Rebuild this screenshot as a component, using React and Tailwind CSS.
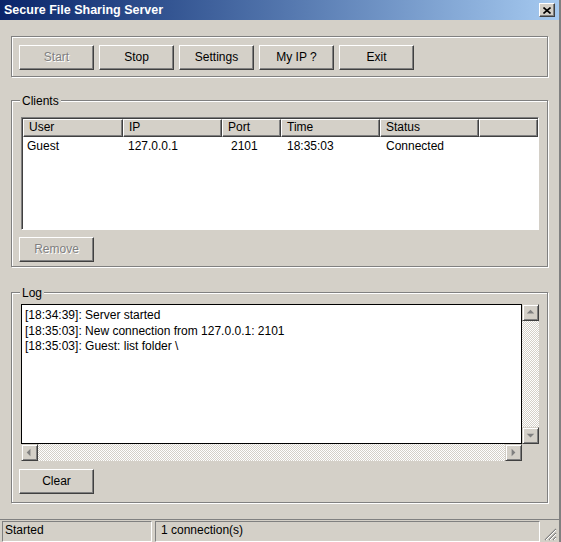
import React from 'react'

const font = { fontFamily: '"Liberation Sans", Arial, sans-serif' }

function Button({ children, disabled }) {
  return (
    <div className="w-[75px] h-[25px] bg-[#d4d0c8] border border-t-white border-l-white border-r-[#404040] border-b-[#404040] shadow-[inset_-1px_-1px_0_#808080] flex items-center justify-center text-[12px] pb-[2px]">
      <span className={disabled ? 'text-[#808080] [text-shadow:1px_1px_0_#ffffff]' : 'text-black'}>{children}</span>
    </div>
  )
}

function Group({ title, className, children }) {
  return (
    <div className={'relative mx-[11px] border border-[#808080] shadow-[inset_1px_1px_0_#ffffff,1px_1px_0_#ffffff] ' + className}>
      <div className="absolute left-[8px] -top-[7px] px-[2px] bg-[#d4d0c8] text-[12px] leading-[14px]">{title}</div>
      {children}
    </div>
  )
}

function ScrollBtn({ dir }) {
  const arrows = {
    up: 'M4 9 L8 5 L12 9 Z',
    down: 'M4 6 L12 6 L8 10 Z',
    left: 'M9 4 L9 12 L5 8 Z',
    right: 'M6 4 L6 12 L10 8 Z',
  }
  return (
    <div className="w-[17px] h-[17px] shrink-0 bg-[#d4d0c8] border border-t-[#d4d0c8] border-l-[#d4d0c8] border-r-[#404040] border-b-[#404040] shadow-[inset_1px_1px_0_#ffffff,inset_-1px_-1px_0_#808080] flex items-center justify-center">
      <svg width="15" height="15" viewBox="0 0 16 16">
        <path d={arrows[dir]} fill="#808080" />
      </svg>
    </div>
  )
}

const checker = 'bg-[repeating-conic-gradient(#d4d0c8_0_25%,#ffffff_0_50%)] bg-[length:2px_2px]'

const cols = [
  { name: 'User', w: 'w-[100px]' },
  { name: 'IP', w: 'w-[99px]' },
  { name: 'Port', w: 'w-[59px]' },
  { name: 'Time', w: 'w-[99px]' },
  { name: 'Status', w: 'w-[99px]' },
]

export default function App() {
  return (
    <div style={font} className="w-[561px] h-[542px] bg-[#d4d0c8] flex flex-col text-black overflow-hidden border-r-2 border-r-[#808080]">
      {/* title bar */}
      <div className="h-[20px] shrink-0 bg-gradient-to-r from-[#0a246a] to-[#a6caf0] flex items-center justify-between pl-[4px] pr-[4px]">
        <span className="text-white font-bold text-[12.5px] leading-none">Secure File Sharing Server</span>
        <div className="w-[16px] h-[14px] bg-[#d4d0c8] border border-t-white border-l-white border-r-[#404040] border-b-[#404040] shadow-[inset_-1px_-1px_0_#808080] flex items-center justify-center">
          <svg width="8" height="7" viewBox="0 0 8 7">
            <path d="M0.5 0.5 L7.5 6.5 M7.5 0.5 L0.5 6.5" stroke="black" strokeWidth="1.6" />
          </svg>
        </div>
      </div>

      {/* toolbar */}
      <div className="mt-[16px] mx-[11px] h-[41px] border border-[#808080] shadow-[inset_1px_1px_0_#ffffff,1px_1px_0_#ffffff] flex items-start gap-[5px] pl-[7px] pt-[8px]">
        <Button disabled>Start</Button>
        <Button>Stop</Button>
        <Button>Settings</Button>
        <Button>My IP ?</Button>
        <Button>Exit</Button>
      </div>

      {/* clients */}
      <Group title="Clients" className="mt-[23px] h-[167px] pt-[16px] pl-[9px] pr-[7px]">
        <div className="w-[518px] h-[113px] bg-white border border-t-[#808080] border-l-[#808080] border-r-white border-b-white shadow-[inset_1px_1px_0_#404040] pl-[1px] pt-[1px] flex flex-col">
          <div className="flex h-[18px] shrink-0">
            {cols.map((c) => (
              <div key={c.name} className={c.w + ' h-[18px] bg-[#d4d0c8] border border-t-white border-l-white border-r-[#404040] border-b-[#404040] shadow-[inset_-1px_-1px_0_#808080] text-[12px] leading-[15px] pl-[5px]'}>
                {c.name}
              </div>
            ))}
            <div className="flex-1 h-[18px] bg-[#d4d0c8] border border-t-white border-l-white border-r-[#404040] border-b-[#404040] shadow-[inset_-1px_-1px_0_#808080]" />
          </div>
          <div className="flex text-[12px] leading-[16px] mt-[1px]">
            <div className="w-[100px] pl-[4px]">Guest</div>
            <div className="w-[99px] pl-[5px]">127.0.0.1</div>
            <div className="w-[59px] pl-[9px]">2101</div>
            <div className="w-[99px] pl-[6px]">18:35:03</div>
            <div className="w-[99px] pl-[6px]">Connected</div>
          </div>
        </div>
        <div className="mt-[7px] -ml-[2px]">
          <Button disabled>Remove</Button>
        </div>
      </Group>

      {/* log */}
      <Group title="Log" className="mt-[25px] h-[211px] pt-[11px] pl-[9px] pr-[7px]">
        <div className="w-[518px] flex flex-col">
          <div className="flex">
            <div className="w-[501px] h-[140px] bg-white border border-black text-[12px] leading-[15.5px] pl-[3px] pt-[3px]">
              <div>[18:34:39]: Server started</div>
              <div>[18:35:03]: New connection from 127.0.0.1: 2101</div>
              <div>[18:35:03]: Guest: list folder \</div>
            </div>
            <div className={'w-[17px] h-[140px] flex flex-col justify-between ' + checker}>
              <ScrollBtn dir="up" />
              <ScrollBtn dir="down" />
            </div>
          </div>
          <div className="flex">
            <div className={'w-[501px] h-[17px] flex justify-between ' + checker}>
              <ScrollBtn dir="left" />
              <ScrollBtn dir="right" />
            </div>
          </div>
        </div>
        <div className="mt-[8px] -ml-[2px]">
          <Button>Clear</Button>
        </div>
      </Group>

      {/* status bar */}
      <div className="mt-[16px] flex items-start h-[23px] pl-[2px] gap-[3px] border-t border-t-[#808080] relative">
        <div className="w-[150px] h-[21px] mt-[1px] border border-t-[#808080] border-l-[#808080] border-r-white border-b-white text-[12px] leading-[17px] pl-[2px]">Started</div>
        <div className="w-[385px] h-[21px] mt-[1px] border border-t-[#808080] border-l-[#808080] border-r-white border-b-white text-[12px] leading-[17px] pl-[5px]">1 connection(s)</div>
        <svg className="absolute right-[2px] bottom-[1px]" width="14" height="14" viewBox="0 0 14 14">
          <path d="M13 2 L2 13 M13 6 L6 13 M13 10 L10 13" stroke="#808080" strokeWidth="1.2" />
          <path d="M13 3 L3 13 M13 7 L7 13 M13 11 L11 13" stroke="#ffffff" strokeWidth="1" />
        </svg>
      </div>
    </div>
  )
}
